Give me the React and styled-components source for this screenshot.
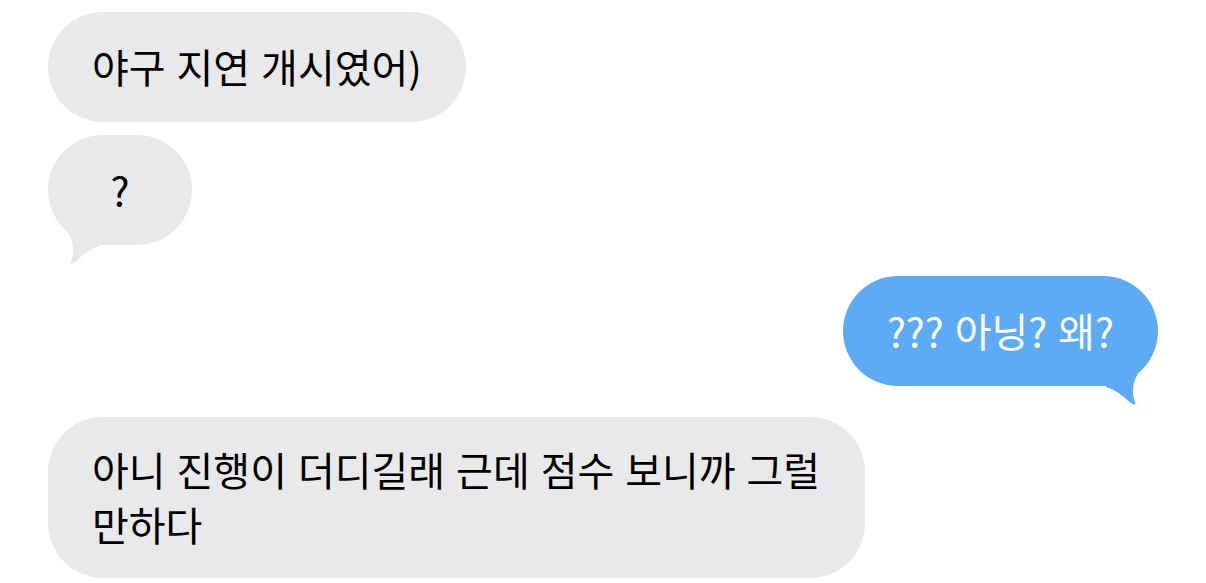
import React from 'react';
import styled, { createGlobalStyle } from 'styled-components';

const GlobalStyle = createGlobalStyle`
  html, body {
    margin: 0;
    padding: 0;
    background: #ffffff;
  }
  body {
    font-family: "Noto Sans CJK KR", "Noto Sans", sans-serif;
  }
`;

const Thread = styled.div`
  width: 1206px;
  height: 583px;
  box-sizing: border-box;
  padding: 12px 48px 0;
  display: flex;
  flex-direction: column;
  gap: 31px;
  overflow: hidden;
`;

const Group = styled.div`
  display: flex;
  flex-direction: column;
  gap: 13px;
  align-items: ${({ $mine }) => ($mine ? 'flex-end' : 'flex-start')};
`;

const Bubble = styled.div`
  position: relative;
  box-sizing: border-box;
  max-width: 817px;
  min-width: ${({ $minWidth }) => $minWidth || 'auto'};
  min-height: 110px;
  padding: ${({ $multi }) => ($multi ? '25px 44px 26px' : '27px 44px 28px')};
  border-radius: 55px;
  background-color: ${({ $mine }) => ($mine ? '#5eabf5' : '#e9e9eb')};
  color: ${({ $mine }) => ($mine ? '#ffffff' : '#000000')};
  font-size: 40px;
  line-height: 55px;
  word-spacing: 2px;
  word-break: keep-all;
  text-align: ${({ $center }) => ($center ? 'center' : 'left')};
`;

const Tail = styled.svg`
  position: absolute;
  top: calc(100% - 12px);
  width: 40px;
  height: 34px;
  ${({ $mine }) => ($mine ? 'right: 16px; transform: scaleX(-1);' : 'left: 16px;')}
  fill: ${({ $mine }) => ($mine ? '#5eabf5' : '#e9e9eb')};
`;

const BubbleTail = ({ mine }) => (
  <Tail $mine={mine} viewBox="0 0 40 34">
    <path d="M4 0 C7 4 9.5 11 9 20 C8.7 24 7.5 26.5 6.8 28 C6 29.8 7.2 31.2 9 30.3 C15 27 22 17 36 13 L36 0 Z" />
  </Tail>
);

const App = () => {
  return (
    <>
      <GlobalStyle />
      <Thread>
        <Group>
          <Bubble>야구 지연 개시였어)</Bubble>
          <Bubble $minWidth="144px" $center>
            ?
            <BubbleTail />
          </Bubble>
        </Group>

        <Group $mine>
          <Bubble $mine>
            ??? 아닝? 왜?
            <BubbleTail mine />
          </Bubble>
        </Group>

        <Group>
          <Bubble $multi>
            아니 진행이 더디길래 근데 점수 보니까 그럴 만하다
          </Bubble>
        </Group>
      </Thread>
    </>
  );
};

export default App;
